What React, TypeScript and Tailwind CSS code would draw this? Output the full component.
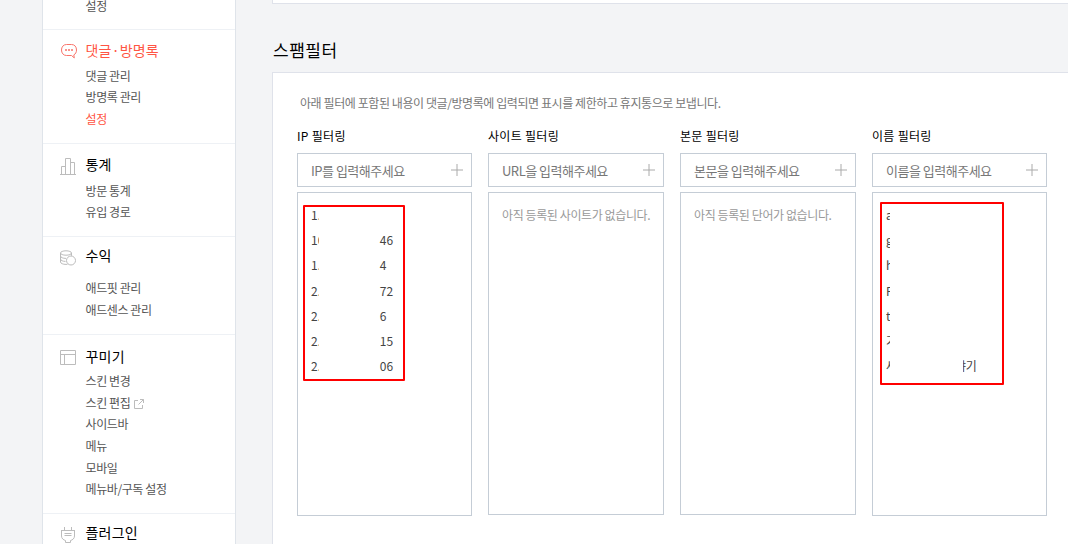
import type { ReactNode } from 'react';

const icons: Record<string, ReactNode> = {
  comment: (
    <svg width="18" height="16" viewBox="0 0 18 16" fill="none" stroke="#f9736a" className="mt-[6px] ml-[17px]">
      <path d="M6.500 1.500h5c3.200 0 5 2.300 5 5.500 0 2.300-1 4-2.700 4.900l.5 3-2.800-2.400h-5c-3.200 0-5-2.500-5-5.500s1.800-5.500 5-5.500z" />
      <path d="M5 7h2M8 7h2M11 7h2" strokeWidth="1.400" />
    </svg>
  ),
  chart: (
    <svg width="16" height="18" viewBox="0 0 16 18" fill="none" stroke="#bcbcbc" className="mt-[7px] ml-[17px]">
      <path d="M0 16.500h16M1.500 16V8.500h4M5.500 16V.5h5V16M10.500 4.500h4V16" />
    </svg>
  ),
  coins: (
    <svg width="16" height="16" viewBox="0 0 16 16" fill="none" stroke="#bcbcbc" className="mt-[8px] ml-[17px]">
      <ellipse cx="6" cy="3" rx="5.500" ry="2.200" />
      <path d="M.5 3v9c0 1.400 2.500 2.400 5.500 2.400l1.500-.1M11.500 3v2.800M.5 6c0 1.500 2.500 2.400 5.500 2.400M.5 9c0 1.500 2.500 2.400 5 2.400" />
      <circle cx="11" cy="10.500" r="4.500" />
    </svg>
  ),
  layout: (
    <svg width="16" height="15" viewBox="0 0 16 15" fill="none" stroke="#bcbcbc" className="mt-[8px] ml-[17px]">
      <path d="M.5.5h15v14H.5zM.5 4.500h15M4.500 4.500v10" />
    </svg>
  ),
  plug: (
    <svg width="16" height="17" viewBox="0 0 16 17" fill="none" stroke="#bcbcbc" className="mt-[8px] ml-[17px]">
      <path d="M1 3.500h14M4.500 0v3.500M11.500 0v3.500M1.500 3.500V9c0 2.500 2 4 4 4.500v2h5v-2c2-.5 4-2 4-4.500V3.500M4.500 6.500h7M4.500 8.500h7" />
    </svg>
  ),
};

type SectionProps = {
  icon: string;
  title: string;
  items: string[];
  box: string;
  titleBox?: string;
  titleLine?: string;
  active?: boolean;
};

function Section({ icon, title, items, box, titleBox = 'h-7', titleLine = 'leading-7', active }: SectionProps) {
  return (
    <section className={`shrink-0 border-b border-[#eef1f5] ${box}`}>
      <div className={`flex ${titleBox}`}>
        <div className="w-[42.500px] shrink-0">{icons[icon]}</div>
        <h2 className={`text-[14px] tracking-[0.2px] ${titleLine} ${active ? 'text-[#ff5544]' : 'text-black'}`}>{title}</h2>
      </div>
      <ul className="pl-[42.500px]">
        {items.map((item) => (
          <li
            key={item}
            className={`flex h-[21.600px] items-center text-[12px] tracking-[-0.4px] ${active && item === '설정' ? 'text-[#ff5544]' : 'text-[#555]'}`}
          >
            {item}
            {item === '스킨 편집' && (
              <svg width="10" height="10" viewBox="0 0 10 10" fill="none" stroke="#bcbcbc" className="mt-[2px] ml-1">
                <path d="M4 1.500H.5v8h8V6M6 .5h3.500V4M9.500.5l-5 5" />
              </svg>
            )}
          </li>
        ))}
      </ul>
    </section>
  );
}

function Clipped({ text, box }: { text: string; box: string }) {
  return <span className={`block overflow-hidden whitespace-nowrap ${box}`}>{text}</span>;
}

const ips = [
  ['1.', ''],
  ['10', '46'],
  ['1.', '4'],
  ['2.', '72'],
  ['2.', '6'],
  ['2.', '15'],
  ['2.', '06'],
];
const names = ['a', 'g', 'h', 'F', 't', '가', '세'];

type FilterProps = { title: string; hint: string; width: string; list: string; children: ReactNode };

function Filter({ title, hint, width, list, children }: FilterProps) {
  return (
    <div className={`shrink-0 ${width}`}>
      <h3 className="h-[29px] text-[12px] leading-6 tracking-[0.3px] text-black">{title}</h3>
      <div className="flex h-[34px] items-center justify-between border border-[#c5cdd6] pr-2 pl-[13px]">
        <span className="mt-px text-[13px] tracking-[-0.500px] text-[#777]">{hint}</span>
        <svg width="12" height="12" viewBox="0 0 12 12" stroke="#aaa" className="-mt-px">
          <path d="M0 6h12M6 0v12" />
        </svg>
      </div>
      <div className={`relative mt-[5px] border border-[#c5cdd6] pl-[13px] ${list}`}>{children}</div>
    </div>
  );
}

export default function App() {
  return (
    <div className="flex h-[544px] w-[1068px] overflow-hidden bg-[#f3f4f6] font-['Noto_Sans_CJK_KR',sans-serif]">
      <aside className="ml-[42px] flex w-[194px] shrink-0 flex-col border-x border-[#dfe4ea] bg-white">
        <div className="h-[30px] shrink-0 border-b border-[#eef1f5] pl-[42.500px] text-[12px] leading-[12px] tracking-[-0.4px] text-[#555]">
          설정
        </div>
        <Section
          icon="comment"
          title="댓글·방명록"
          items={['댓글 관리', '방명록 관리', '설정']}
          box="h-[114px] pt-[7px]"
          titleLine="leading-[27px]"
          active
        />
        <Section
          icon="chart"
          title="통계"
          items={['방문 통계', '유입 경로']}
          box="h-[93px] pt-[7px]"
          titleBox="h-[28.900px]"
          titleLine="leading-[27px]"
        />
        <Section icon="coins" title="수익" items={['애드핏 관리', '애드센스 관리']} box="h-[98px] pt-[5px]" titleBox="h-[35.500px]" titleLine="leading-[27px]" />
        <Section
          icon="layout"
          title="꾸미기"
          items={['스킨 변경', '스킨 편집', '사이드바', '메뉴', '모바일', '메뉴바/구독 설정']}
          box="h-[179px] pt-[7px]"
          titleBox="h-[28.400px]"
        />
        <Section icon="plug" title="플러그인" items={[]} box="h-[60px] pt-[5px]" titleLine="leading-[27px]" />
      </aside>

      <main className="ml-9 flex min-w-0 flex-1 flex-col">
        <div className="h-1 shrink-0 border-b border-l border-[#dfe2ea] bg-white" />
        <h1 className="h-[68px] shrink-0 pt-8 pl-px text-[17px] leading-7 tracking-[0.500px] text-black">스팸필터</h1>
        <div className="flex-1 border-t border-l border-[#dfe2ea] bg-white pl-6">
          <p className="mt-[18px] h-[33px] pl-[3px] text-[12px] leading-6 tracking-[-0.420px] text-[#777]">
            아래 필터에 포함된 내용이 댓글/방명록에 입력되면 표시를 제한하고 휴지통으로 보냅니다.
          </p>
          <div className="flex gap-4">
            <Filter title="IP 필터링" hint="IP를 입력해주세요" width="w-[175px]" list="h-[324px] pt-[9.600px]">
              {ips.map(([head, tail], i) => (
                <div key={i} className="flex h-[25.150px] items-center text-[12px] text-[#444]">
                  <Clipped text={head} box="w-2 mr-[60.800px]" />
                  <span>{tail}</span>
                </div>
              ))}
              <div className="absolute top-3 left-[5px] h-[176px] w-[102px] rounded-[1px] border-2 border-[#ff0000]" />
            </Filter>
            <Filter title="사이트 필터링" hint="URL을 입력해주세요" width="w-[176px]" list="h-[323px] pt-[10px]">
              <p className="text-[12px] leading-6 tracking-[-0.400px] text-[#999]">아직 등록된 사이트가 없습니다.</p>
            </Filter>
            <Filter title="본문 필터링" hint="본문을 입력해주세요" width="w-[176px]" list="h-[323px] pt-[10px]">
              <p className="text-[12px] leading-6 tracking-[-0.400px] text-[#999]">아직 등록된 단어가 없습니다.</p>
            </Filter>
            <Filter title="이름 필터링" hint="이름을 입력해주세요" width="w-[175px]" list="h-[324px] pt-[9.600px]">
              {names.map((name, i) => (
                <div key={name} className="flex h-[25.150px] items-center text-[12px] text-[#444]">
                  <Clipped text={name} box="w-1" />
                  {i === names.length - 1 && (
                    <span className="ml-[73px] flex w-[13.500px] justify-end overflow-hidden whitespace-nowrap tracking-[-0.350px]">야기</span>
                  )}
                </div>
              ))}
              <div className="absolute top-[9px] left-[7px] h-[183px] w-[124px] rounded-[1px] border-2 border-[#ff0000]" />
            </Filter>
          </div>
        </div>
      </main>
    </div>
  );
}
